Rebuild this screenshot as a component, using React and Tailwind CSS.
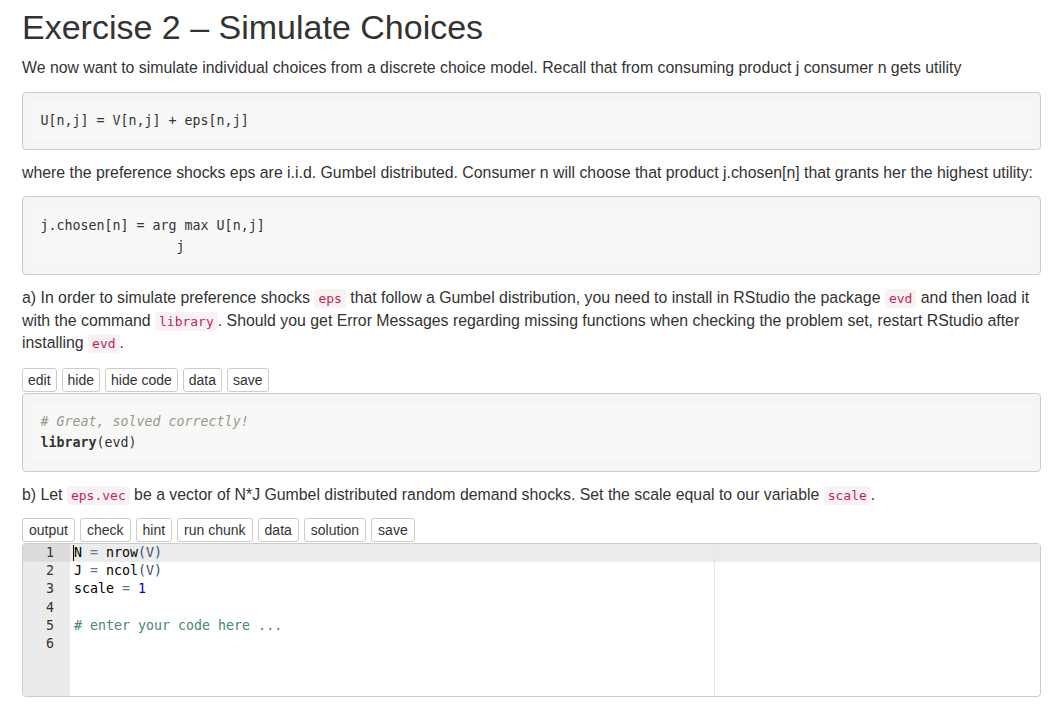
function Code({ children }) {
  return (
    <code className="rounded-[4px] bg-[#f9f2f4] px-[4px] py-[2px] text-[13px] leading-[1] text-[#c7254e] [font-family:'DejaVu_Sans_Mono',monospace]">
      {children}
    </code>
  )
}

function Pre({ children }) {
  return (
    <div className="mb-[12px] rounded-[4px] border border-[#cccccc] bg-[#f5f5f5] p-[9.5px]">
      <div className="bg-[#f8f8f8] px-[8px] py-[8px] text-[13.3px] leading-[21px] text-[#333] whitespace-pre [font-family:'DejaVu_Sans_Mono',monospace]">
        {children}
      </div>
    </div>
  )
}

function Buttons({ items, wide }) {
  return (
    <div className="flex gap-[5px] mb-[1px]">
      {items.map((t) => (
        <button
          key={t}
          type="button"
          className={`rounded-[3px] border border-[#cccccc] bg-white py-[1px] text-[14px] leading-[20px] text-[#333] ${wide ? 'px-[6px]' : 'px-[5px]'}`}
        >
          {t}
        </button>
      ))}
    </div>
  )
}

const lines = [
  <>N <span className="text-[#687687]">=</span> nrow<span className="text-[#3c4c72]">(V)</span></>,
  <>J <span className="text-[#687687]">=</span> ncol<span className="text-[#3c4c72]">(V)</span></>,
  <>scale <span className="text-[#687687]">=</span> <span className="text-[#0000cd]">1</span></>,
  <></>,
  <span className="text-[#4c886b]"># enter your code here ...</span>,
  <></>,
]

function Editor() {
  return (
    <div className="flex h-[154px] overflow-hidden rounded-[4px] border border-[#cccccc] bg-white text-[13.3px] leading-[18.2px] [font-family:'DejaVu_Sans_Mono',monospace]">
      <div className="w-[47px] shrink-0 bg-[#ebebeb] text-[#333]">
        {lines.map((_, i) => (
          <div key={i} className={`pr-[16px] text-right ${i === 0 ? 'bg-[#dcdcdc]' : ''}`}>
            {i + 1}
          </div>
        ))}
      </div>
      <div className="relative flex-1 text-black">
        {lines.map((l, i) => (
          <div key={i} className={`h-[18.2px] pl-[4px] whitespace-pre ${i === 0 ? 'bg-[#ececec]' : ''}`}>
            {l}
          </div>
        ))}
        <div className="absolute left-[3px] top-[1px] h-[16px] w-px bg-black" />
        <div className="absolute left-[644px] top-0 bottom-0 w-px bg-[#e6e6e6]" />
      </div>
    </div>
  )
}

export default function App() {
  return (
    <div className="min-h-[708px] bg-white pl-[22px] pr-[23px] text-[15.85px] leading-[22.5px] text-[#333] [font-family:'Liberation_Sans',Arial,sans-serif]">
      <h1 className="pt-[9px] mb-[11px] text-[34px] leading-[37px] font-normal">Exercise 2 – Simulate Choices</h1>
      <p className="mb-[12px]">
        We now want to simulate individual choices from a discrete choice model. Recall that from consuming product j consumer n gets utility
      </p>
      <Pre>U[n,j] = V[n,j] + eps[n,j]</Pre>
      <p className="mb-[12px] whitespace-nowrap">
        where the preference shocks eps are i.i.d. Gumbel distributed. Consumer n will choose that product j.chosen[n] that grants her the highest utility:
      </p>
      <Pre>{'j.chosen[n] = arg max U[n,j]\n                 j'}</Pre>
      <p className="mb-[13px]">
        a) In order to simulate preference shocks <Code>eps</Code> that follow a Gumbel distribution, you need to install in RStudio the package <Code>evd</Code> and then load it with the command <Code>library</Code>. Should you get Error Messages regarding missing functions when checking the problem set, restart RStudio after installing <Code>evd</Code>.
      </p>
      <Buttons items={['edit', 'hide', 'hide code', 'data', 'save']} />
      <Pre>
        <span className="italic text-[#999988]"># Great, solved correctly!</span>
        {'\n'}
        <span className="font-bold">library</span>(evd)
      </Pre>
      <p className="mb-[12px]">
        b) Let <Code>eps.vec</Code> be a vector of N*J Gumbel distributed random demand shocks. Set the scale equal to our variable <Code>scale</Code>.
      </p>
      <Buttons wide items={['output', 'check', 'hint', 'run chunk', 'data', 'solution', 'save']} />
      <Editor />
    </div>
  )
}
